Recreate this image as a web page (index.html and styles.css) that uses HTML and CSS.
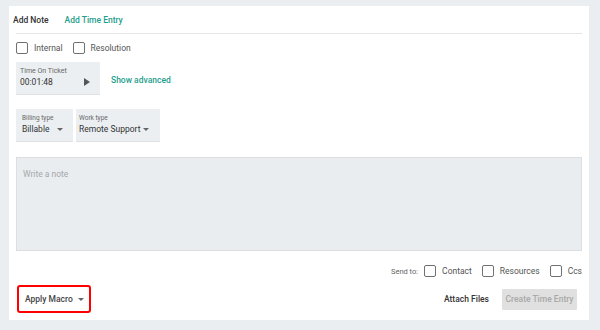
FILE: index.html
```html
<!DOCTYPE html>
<html lang="en">
<head>
    <meta charset="UTF-8">
    <title>Add Time Entry</title>
    <link rel="stylesheet" href="styles.css">
</head>
<body>
    <div class="card">
        <div class="tabs">
            <span class="tab first">Add Note</span>
            <span class="tab active">Add Time Entry</span>
        </div>

        <div class="check-row">
            <label class="check"><span class="box"></span>Internal</label>
            <label class="check"><span class="box"></span>Resolution</label>
        </div>

        <div class="timer-row">
            <div class="field timer">
                <div class="field-label">Time On Ticket</div>
                <div class="field-value">
                    <span>00:01:48</span>
                    <span class="play"></span>
                </div>
            </div>
            <a class="link">Show advanced</a>
        </div>

        <div class="select-row">
            <div class="field billing">
                <div class="field-label small">Billing type</div>
                <div class="field-value">Billable <span class="caret"></span></div>
            </div>
            <div class="field work">
                <div class="field-label small">Work type</div>
                <div class="field-value">Remote Support <span class="caret"></span></div>
            </div>
        </div>

        <div class="note">Write a note</div>

        <div class="send-row">
            <span class="send-label">Send to:</span>
            <label class="check"><span class="box"></span>Contact</label>
            <label class="check"><span class="box"></span>Resources</label>
            <label class="check"><span class="box"></span>Ccs</label>
        </div>

        <div class="footer">
            <div class="macro">Apply Macro <span class="caret"></span></div>
            <div class="actions">
                <span class="attach">Attach Files</span>
                <button class="create" disabled>Create Time Entry</button>
            </div>
        </div>
    </div>
</body>
</html>
```

FILE: styles.css
```css
body {
    margin: 0;
    background: #eaeef1;
    font-family: Roboto, "Liberation Sans", sans-serif;
    color: #333;
    width: 600px;
    height: 330px;
    overflow: hidden;
}
.card {
    margin: 6px 0 0 9px;
    width: 580px;
    height: 314px;
    box-sizing: border-box;
    background: #fff;
    padding: 0 7px;
    display: flex;
    flex-direction: column;
}
.tabs {
    height: 27px;
    border-bottom: 1px solid #e6e6e6;
    display: flex;
    align-items: center;
    gap: 16px;
    font-size: 8.5px;
    font-weight: 500;
}
.tab.first {
    margin-left: -3px;
    color: #333;
}
.tab.active {
    color: #1f9e8c;
}
.check-row {
    margin-top: 8px;
    display: flex;
    gap: 10px;
}
.check {
    display: flex;
    align-items: center;
    gap: 6px;
    font-size: 8.5px;
    color: #555;
    height: 12px;
    white-space: nowrap;
}
.box {
    width: 12px;
    height: 12px;
    box-sizing: border-box;
    border: 1.5px solid #707070;
    border-radius: 2px;
}
.timer-row {
    margin-top: 8px;
    display: flex;
    align-items: center;
    gap: 11px;
}
.field {
    background: #eceff2;
    height: 33px;
    box-sizing: border-box;
    border-bottom: 1px solid #dfe2e5;
    padding: 5px 4px 0;
    white-space: nowrap;
}
.field-label {
    font-size: 7px;
    color: #666;
    line-height: 8px;
}
.field-label.small {
    font-size: 6.5px;
}
.field-value {
    font-size: 8.5px;
    color: #333;
    margin-top: 2px;
    display: flex;
    align-items: center;
    justify-content: space-between;
}
.timer {
    width: 84px;
    padding-right: 10px;
}
.play {
    width: 0;
    height: 0;
    border-top: 4px solid transparent;
    border-bottom: 4px solid transparent;
    border-left: 6px solid #555;
}
.link {
    font-size: 8.5px;
    font-weight: 500;
    color: #1f9e8c;
    margin-top: 3px;
}
.select-row {
    margin-top: 14px;
    display: flex;
    gap: 3px;
}
.billing {
    width: 57px;
    padding-left: 6px;
    padding-right: 10px;
}
.work {
    width: 84px;
    padding-left: 3px;
    padding-right: 6px;
}
.work .field-value {
    justify-content: flex-start;
    gap: 3px;
}
.caret {
    width: 0;
    height: 0;
    border-left: 3px solid transparent;
    border-right: 3px solid transparent;
    border-top: 3px solid #666;
}
.note {
    margin-top: 15px;
    height: 94px;
    box-sizing: border-box;
    background: #eaedf0;
    border: 1px solid #dcdfe2;
    padding: 11px 6px;
    font-size: 8.5px;
    color: #a5a8ab;
}
.send-row {
    margin-top: 14px;
    display: flex;
    justify-content: flex-end;
    align-items: center;
    gap: 10px;
}
.send-label {
    font-size: 7.5px;
    color: #666;
    margin-right: -4px;
}
.footer {
    margin-top: 8px;
    display: flex;
    justify-content: space-between;
    align-items: center;
}
.macro {
    margin-left: 1px;
    width: 74px;
    height: 28px;
    box-sizing: border-box;
    border: 2px solid #f00;
    border-radius: 3px;
    padding-left: 6px;
    display: flex;
    align-items: center;
    gap: 5px;
    font-size: 8.5px;
    font-weight: 500;
    color: #444;
}
.actions {
    display: flex;
    align-items: center;
    gap: 13px;
    padding-right: 5px;
}
.attach {
    font-size: 8.5px;
    font-weight: 500;
    color: #333;
}
.create {
    width: 75px;
    height: 21px;
    border: none;
    border-radius: 1px;
    background: #e0e0e0;
    color: #a8a8a8;
    font-family: Roboto, "Liberation Sans", sans-serif;
    font-size: 8.5px;
    font-weight: 500;
    padding: 0;
}
```
